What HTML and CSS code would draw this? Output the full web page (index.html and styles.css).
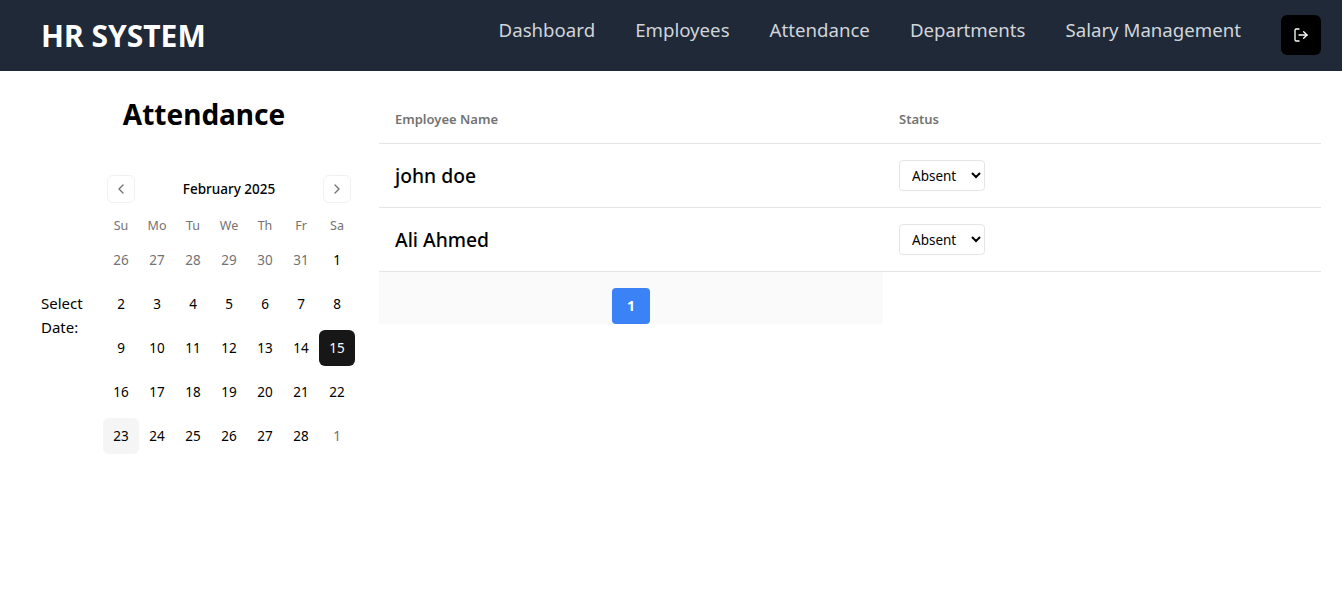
FILE: index.html
```html
<!DOCTYPE html>
<html lang="en">
<head>
    <meta charset="UTF-8">
    <title>HR System</title>
    <link rel="stylesheet" href="styles.css">
</head>
<body>
    <header class="topbar">
        <div class="logo">HR SYSTEM</div>
        <nav class="nav">
            <a href="#">Dashboard</a>
            <a href="#">Employees</a>
            <a href="#">Attendance</a>
            <a href="#">Departments</a>
            <a href="#">Salary Management</a>
        </nav>
        <button class="logout" aria-label="Log out">
            <svg width="16" height="16" viewBox="0 0 24 24" fill="none" stroke="currentColor" stroke-width="2" stroke-linecap="round" stroke-linejoin="round">
                <path d="M9 21H5a2 2 0 0 1-2-2V5a2 2 0 0 1 2-2h4"/>
                <polyline points="16 17 21 12 16 7"/>
                <line x1="21" y1="12" x2="9" y2="12"/>
            </svg>
        </button>
    </header>

    <main class="page">
        <section class="side">
            <h1 class="title">Attendance</h1>
            <div class="picker">
                <label class="picker-label">Select Date:</label>
                <div class="calendar">
                    <div class="cal-head">
                        <button class="cal-nav" aria-label="Previous month">
                            <svg width="16" height="16" viewBox="0 0 24 24" fill="none" stroke="currentColor" stroke-width="2" stroke-linecap="round" stroke-linejoin="round"><path d="m15 18-6-6 6-6"/></svg>
                        </button>
                        <span class="cal-month">February 2025</span>
                        <button class="cal-nav" aria-label="Next month">
                            <svg width="16" height="16" viewBox="0 0 24 24" fill="none" stroke="currentColor" stroke-width="2" stroke-linecap="round" stroke-linejoin="round"><path d="m9 18 6-6-6-6"/></svg>
                        </button>
                    </div>
                    <div class="cal-week">
                        <span>Su</span><span>Mo</span><span>Tu</span><span>We</span><span>Th</span><span>Fr</span><span>Sa</span>
                    </div>
                    <div class="cal-days">
                        <span class="muted">26</span><span class="muted">27</span><span class="muted">28</span><span class="muted">29</span><span class="muted">30</span><span class="muted">31</span><span>1</span>
                        <span>2</span><span>3</span><span>4</span><span>5</span><span>6</span><span>7</span><span>8</span>
                        <span>9</span><span>10</span><span>11</span><span>12</span><span>13</span><span>14</span><span class="selected">15</span>
                        <span>16</span><span>17</span><span>18</span><span>19</span><span>20</span><span>21</span><span>22</span>
                        <span class="today">23</span><span>24</span><span>25</span><span>26</span><span>27</span><span>28</span><span class="muted">1</span>
                    </div>
                </div>
            </div>
        </section>

        <section class="content">
            <table class="table">
                <thead>
                    <tr>
                        <th class="col-name">Employee Name</th>
                        <th>Status</th>
                    </tr>
                </thead>
                <tbody>
                    <tr>
                        <td class="emp">john doe</td>
                        <td>
                            <select class="status">
                                <option>Absent</option>
                                <option>Present</option>
                            </select>
                        </td>
                    </tr>
                    <tr>
                        <td class="emp">Ali Ahmed</td>
                        <td>
                            <select class="status">
                                <option>Absent</option>
                                <option>Present</option>
                            </select>
                        </td>
                    </tr>
                </tbody>
                <tfoot>
                    <tr>
                        <td class="pager"><button class="page-btn">1</button></td>
                        <td class="pager-rest"></td>
                    </tr>
                </tfoot>
            </table>
        </section>
    </main>
</body>
</html>
```

FILE: styles.css
```css
*{
    margin: 0;
    padding: 0;
    box-sizing: border-box;
}

body{
    font-family: "Noto Sans", "Open Sans", sans-serif;
    background-color: #fff;
    color: #000;
}

/* top bar */
.topbar{
    height: 71px;
    background-color: #1f2937;
    padding: 15px 21px 0 41px;
    display: flex;
    align-items: flex-start;
}

.logo{
    font-size: 30px;
    line-height: 42px;
    font-weight: 700;
    color: #fff;
    margin-right: auto;
}

.nav{
    display: flex;
    gap: 40px;
    margin-right: 40px;
}

.nav a{
    font-size: 18.65px;
    line-height: 30px;
    color: #d1d5db;
    text-decoration: none;
}

.logout{
    width: 40px;
    height: 40px;
    border: none;
    border-radius: 6px;
    background-color: #000;
    color: #fff;
    display: flex;
    align-items: center;
    justify-content: center;
}

/* main area */
.page{
    display: flex;
    gap: 12px;
    padding: 23px 21px 0 41px;
}

.side{
    width: 326px;
    flex-shrink: 0;
}

.title{
    font-size: 28px;
    line-height: 40px;
    font-weight: 700;
    text-align: center;
    margin-bottom: 29px;
}

.picker{
    display: flex;
    align-items: center;
}

.picker-label{
    width: 50px;
    font-size: 15px;
    line-height: 24px;
}

.calendar{
    padding: 12px;
}

.cal-head{
    display: flex;
    align-items: center;
    justify-content: space-between;
    padding: 0 4px;
    height: 28px;
}

.cal-nav{
    width: 28px;
    height: 28px;
    border: 1px solid #f0f0f0;
    border-radius: 6px;
    background-color: #fff;
    color: #737373;
    display: flex;
    align-items: center;
    justify-content: center;
}

.cal-month{
    font-size: 13.5px;
    font-weight: 500;
}

.cal-week{
    display: grid;
    grid-template-columns: repeat(7, 36px);
    margin-top: 13px;
    height: 20px;
    font-size: 12.5px;
    line-height: 20px;
    text-align: center;
    color: #737373;
}

.cal-days{
    display: grid;
    grid-template-columns: repeat(7, 36px);
    grid-auto-rows: 36px;
    row-gap: 8px;
    margin-top: 6px;
}

.cal-days span{
    display: flex;
    align-items: center;
    justify-content: center;
    font-size: 13.5px;
    border-radius: 6px;
}

.cal-days .muted{
    color: #737373;
}

.cal-days .selected{
    background-color: #171717;
    color: #fafafa;
}

.cal-days .today{
    background-color: #f5f5f5;
}

/* table */
.content{
    flex: 1;
    padding-top: 1px;
}

.table{
    width: 942px;
    table-layout: fixed;
    border-collapse: collapse;
}

.table th{
    height: 48px;
    padding: 0 16px;
    text-align: left;
    font-size: 13px;
    font-weight: 600;
    color: #737373;
    border-bottom: 1px solid #e5e5e5;
}

.table .col-name{
    width: 504px;
}

.table tbody td{
    height: 64px;
    padding: 0 16px;
    border-bottom: 1px solid #e5e5e5;
}

.table tbody .emp{
    font-size: 19.3px;
    font-weight: 500;
}

.status{
    width: 86px;
    height: 31px;
    padding: 2px 0 0 8px;
    font-family: inherit;
    font-size: 13.5px;
    color: #000;
    background-color: #fff;
    border: 1px solid #e5e5e5;
    border-radius: 4px;
}

.pager{
    height: 52px;
    background-color: #fafafa;
    text-align: center;
    vertical-align: top;
    padding-top: 16px;
}

.page-btn{
    display: block;
    width: 38px;
    height: 36px;
    margin: 0 auto;
    border: none;
    border-radius: 4px;
    background-color: #3b82f6;
    color: #fff;
    font-family: inherit;
    font-size: 14px;
    font-weight: 700;
}
```
